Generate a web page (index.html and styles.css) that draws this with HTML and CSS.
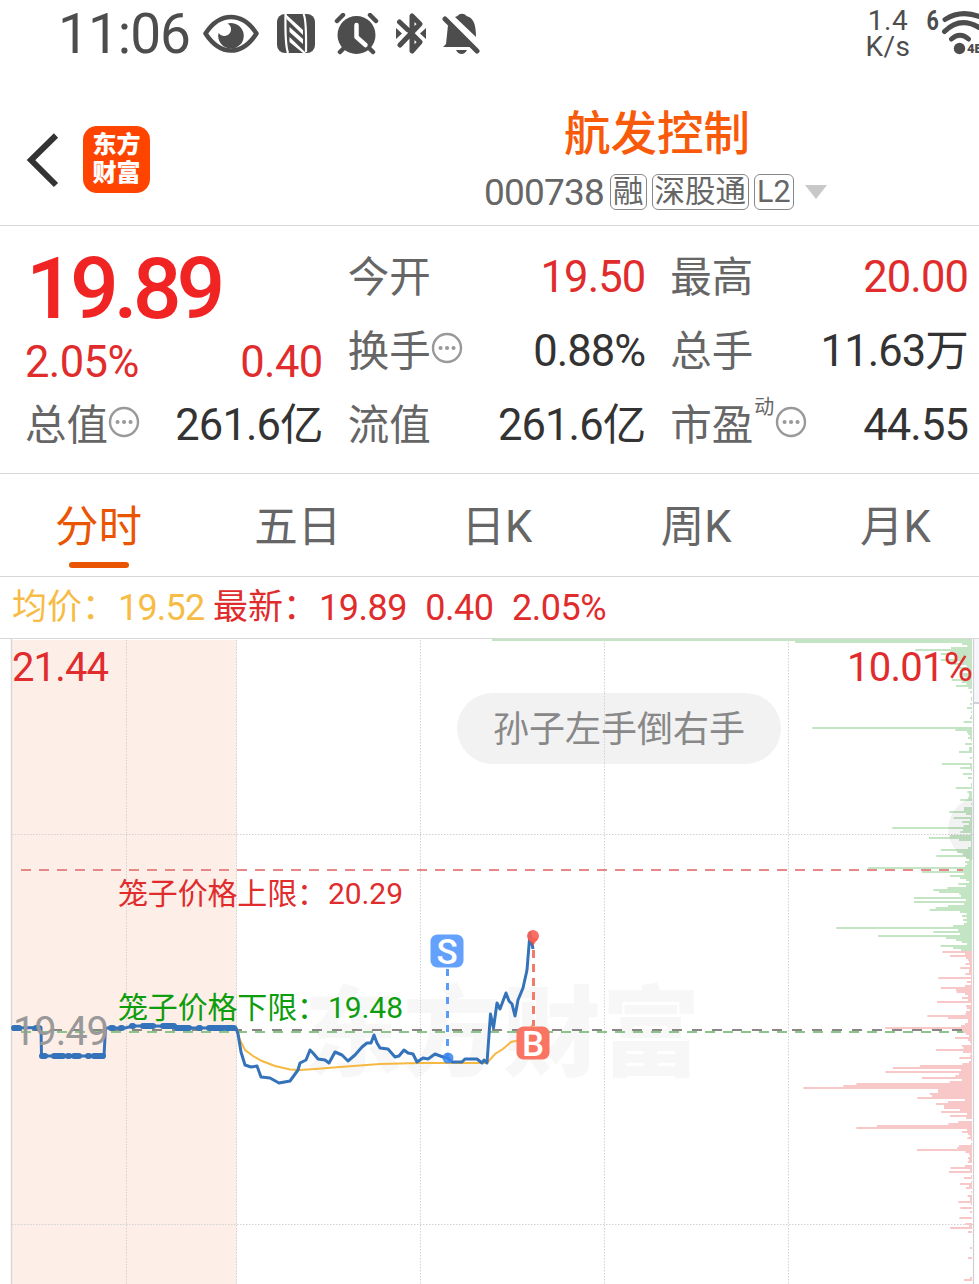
FILE: index.html
```html
<!DOCTYPE html>
<html lang="zh-CN">
<head>
    <meta charset="UTF-8">
    <meta name="viewport" content="width=device-width, initial-scale=1.0">
    <title>航发控制 000738</title>
    <link rel="stylesheet" href="styles.css">
</head>
<body>
    <div class="status-bar">
        <span class="clock">11:06</span>
        <svg class="icon-eye" width="56" height="40" viewBox="0 0 56 40">
            <path d="M2.500 19.500C10 8 18 3 28 3s18 5 25.500 16.500C46 31 38 36.500 28 36.500S10 31 2.500 19.500z" fill="none" stroke="#4d4d4d" stroke-width="4.500" stroke-linejoin="round"/>
            <path d="M24.500 9.500A12.800 12.800 0 1 1 15.500 19a7 7 0 0 0 12-1c1.500-3.500 0-7-3-8.500z" fill="#4d4d4d"/>
        </svg>
        <svg class="icon-nfc" width="40" height="42" viewBox="0 0 40 42">
            <rect x="1" y="1" width="38" height="39" rx="8" fill="#4d4d4d"/>
            <path d="M9.500 1Q9 32 12 40M27.500 1Q30.500 6 30 39" fill="none" stroke="#fff" stroke-width="2.200"/>
            <path d="M9.500 1L27 17v5L10.500 6zM13.500 14L27 26v5L13.500 19zM13.500 24L30 40h-3L13.500 29z" fill="#fff"/>
        </svg>
        <svg class="icon-alarm" width="46" height="42" viewBox="0 0 46 42">
            <circle cx="22.500" cy="22" r="19" fill="#4d4d4d"/>
            <path d="M3 8l6-6M42 8l-6-6M10 35l-4 4M35 35l4 4" stroke="#4d4d4d" stroke-width="4.500" stroke-linecap="round"/>
            <path d="M22.500 12v12l9 8" fill="none" stroke="#fff" stroke-width="4.500" stroke-linecap="round" stroke-linejoin="round"/>
        </svg>
        <svg class="icon-bluetooth" width="30" height="44" viewBox="0 0 30 44">
            <path d="M3.500 10l8.500 8M16 22l8 8-8 9V26M4 33L24 12l-8-8v12" fill="none" stroke="#4d4d4d" stroke-width="5" stroke-linecap="round" stroke-linejoin="round"/>
            <path d="M0 16l6 5.500L0 27zM30 16l-6 5.500 6 5.500z" fill="#4d4d4d"/>
        </svg>
        <svg class="icon-bell" width="40" height="44" viewBox="0 0 40 44">
            <path d="M6 13q-1 10-2 19l-3 3h29zM13 5q3-1 4-2.500 3-1.500 6 0Q24 4 27 5q7 3 7 20zM14 38h11q-2 4-5.500 4T14 38z" fill="#4d4d4d"/>
            <path d="M3 7l32 32" stroke="#4d4d4d" stroke-width="5" stroke-linecap="round"/>
        </svg>
        <div class="speed"><span>1.4</span><span>K/s</span></div>
        <svg class="icon-wifi" width="54" height="52" viewBox="0 0 54 52">
            <text x="2" y="22" class="wifi-gen">6</text>
            <path d="M20 11.500Q36 1.500 54 8.500M19.500 23.500Q35 8 54 19.500M26.500 31q8.500-7.500 17 0" fill="none" stroke="#4d4d4d" stroke-width="5" stroke-linecap="round"/>
            <circle cx="34.500" cy="40.500" r="5.700" fill="#4d4d4d"/>
            <text x="42" y="45" class="wifi-band">4E</text>
        </svg>
    </div>

    <div class="header">
        <svg class="back" width="36" height="58" viewBox="0 0 36 58">
            <path d="M31 4.500L6 29l25 25" fill="none" stroke="#333" stroke-width="6"/>
        </svg>
        <div class="logo"><span>东方</span><span>财富</span></div>
        <div class="stock">
            <div class="stock-name">航发控制</div>
            <div class="stock-code">
                <span class="code">000738</span>
                <span class="tag">融</span>
                <span class="tag">深股通</span>
                <span class="tag">L2</span>
                <span class="triangle"></span>
            </div>
        </div>
    </div>

    <div class="quote">
        <div class="quote-col">
            <div class="price">19.89</div>
            <div class="change"><span>2.05%</span><span>0.40</span></div>
            <div class="row">
                <span class="label">总值</span>
                <svg class="more" width="32" height="32" viewBox="0 0 32 32"><circle cx="16" cy="16" r="14"/><path d="M9.500 16h.1M16 16h.1M22.500 16h.1"/></svg>
                <span class="value">261.6亿</span>
            </div>
        </div>
        <div class="quote-col">
            <div class="row"><span class="label">今开</span><span class="value red">19.50</span></div>
            <div class="row">
                <span class="label">换手</span>
                <svg class="more" width="32" height="32" viewBox="0 0 32 32"><circle cx="16" cy="16" r="14"/><path d="M9.500 16h.1M16 16h.1M22.500 16h.1"/></svg>
                <span class="value">0.88%</span>
            </div>
            <div class="row"><span class="label">流值</span><span class="value">261.6亿</span></div>
        </div>
        <div class="quote-col">
            <div class="row"><span class="label">最高</span><span class="value red">20.00</span></div>
            <div class="row"><span class="label">总手</span><span class="value">11.63万</span></div>
            <div class="row">
                <span class="label">市盈</span><span class="sup">动</span>
                <svg class="more" width="32" height="32" viewBox="0 0 32 32"><circle cx="16" cy="16" r="14"/><path d="M9.500 16h.1M16 16h.1M22.500 16h.1"/></svg>
                <span class="value">44.55</span>
            </div>
        </div>
    </div>

    <div class="tabs">
        <div class="tab active">分时</div>
        <div class="tab">五日</div>
        <div class="tab">日K</div>
        <div class="tab">周K</div>
        <div class="tab">月K</div>
    </div>

    <div class="legend">
        <span class="avg">均价：</span><span class="avg num">19.52</span>
        <span class="last">最新：</span><span class="num">19.89</span><span class="num">0.40</span><span class="num">2.05%</span>
    </div>

    <svg class="chart" width="979" height="646" viewBox="0 638 979 646">
        <rect x="12" y="640" width="225" height="644" fill="#fdeee8"/>
        <text class="watermark" x="304" y="1068" textLength="396">东方财富</text>

        <!-- grid -->
        <path class="grid" d="M126.500 640V1284M236.500 640V1284M420.500 640V1284M604.500 640V1284M788.500 640V1284M12 834.500H973M12 1224.500H973"/>
        <path d="M0 638.500H979" stroke="#d8d8d8"/>
        <path d="M11.500 639V1284" stroke="#dcd8d8" stroke-width="1.500"/>
        <rect x="974" y="639" width="5" height="63" fill="#f6f6fb"/>
        <path d="M974 703H979" stroke="#d0d0da" stroke-width="2"/>

        <g id="volumes"></g>
        <path d="M973.500 639V1284" stroke="#d0d0d4" stroke-width="1.200"/>
        <path d="M973 798C940 806 940 852 973 860z" fill="#000" opacity=".05"/>

        <!-- limits and previous close -->
        <path d="M21 870H963" stroke="#e68888" stroke-width="2" stroke-dasharray="10 8"/>
        <path d="M12 1030H963" stroke="#8a8683" stroke-width="2" stroke-dasharray="10 10"/>
        <path d="M21 1032H963" stroke="#8cc48c" stroke-width="2" stroke-dasharray="10 8"/>

        <polyline class="avg-line" points="237,1029 240,1040 245,1050 253,1056 262,1061 275,1066 290,1069.500 300,1070 315,1069 340,1067 380,1064 420,1063 487,1063 495,1054 503,1049 511,1042 520,1040 527,1036 533,1024"/>
        <polyline class="price-line" points="12,1028 41,1027.500 41.500,1056 104,1056 105.500,1028 125,1028 133,1026 155,1026 175,1026.500 180,1028 236,1028 238,1034 241,1052 245,1065 251,1067 257,1066 261,1077 270,1078 279,1083 290,1081 298,1070 300,1063 306,1060 310,1050 313,1053 318,1059 325,1060 329,1063 335,1052 342,1055 348,1061 355,1055 362,1047 367,1043 371,1043 374,1035 377,1043 380,1048 388,1049 395,1057 399,1056 404,1050 408,1053 413,1054 417,1062 423,1058 428,1059 435,1054 443,1057 448,1058 452,1062 462,1062 465,1059 477,1059 482,1063 484,1060 487,1063 490.500,1014 493.500,1028 497,1003 500,1009 506,993 509,1001 512,1004 515,1016 518,1000 523,988 527,970 530,933 533,949"/>
        <path class="auction" d="M14 1028h5M36 1028h3M42 1056h3M54 1056h9M68 1056h1M74 1056h5M88 1056h1M94 1056h9M111 1028h2M121 1028h1M132 1026h1M143 1026h10M163 1026h11M177 1028h12M199 1028h1M209 1028h14M226 1028h8"/>

        <!-- trade markers -->
        <path d="M447.500 969V1056" stroke="#5b9cf6" stroke-width="3" stroke-dasharray="7 7"/>
        <circle cx="448" cy="1058" r="5.500" fill="#3585ee" opacity=".85"/>
        <rect x="430.500" y="934.500" width="33" height="33" rx="7" fill="#64a1fc"/>
        <text class="marker" x="447" y="963.500">S</text>
        <path d="M533.500 950V1026" stroke="#f27b6b" stroke-width="3" stroke-dasharray="8 6"/>
        <path d="M528 938h10l-5 8z" fill="#ee4c40" opacity=".8"/>
        <circle cx="533" cy="936" r="6" fill="#f95f52" opacity=".9"/>
        <rect x="516.500" y="1026.500" width="33" height="33" rx="7" fill="#fa7463"/>
        <text class="marker" x="533" y="1055.500">B</text>

        <text x="12" y="681" class="axis red" textLength="97">21.44</text>
        <text x="847" y="681" class="axis red" textLength="126">10.01%</text>
        <text x="13" y="1045" class="axis" textLength="96">19.49</text>
        <text x="118" y="904" class="limit red" textLength="209">笼子价格上限：</text>
        <text x="328" y="904" class="limit red" textLength="75">20.29</text>
        <text x="118" y="1018" class="limit green" textLength="209">笼子价格下限：</text>
        <text x="328" y="1018" class="limit green" textLength="75">19.48</text>

        <rect x="457" y="693" width="324" height="71" rx="35.500" fill="#f2f2f2"/>
        <path class="grid" d="M604.500 693V764"/>
        <text x="493" y="742" class="bubble" textLength="252">孙子左手倒右手</text>
    </svg>
    <script src="chart.js"></script>
</body>
</html>
```

FILE: styles.css
```css
body {
    margin: 0;
    width: 979px;
    height: 1284px;
    overflow: hidden;
    background-color: #ffffff;
    color: #333333;
    font-family: Roboto, "Noto Sans CJK SC", sans-serif;
}
.status-bar {
    display: flex;
    align-items: center;
    height: 68px;
    box-sizing: border-box;
    padding-left: 58px;
    color: #4d4d4d;
}
.status-bar svg {
    flex: none;
}
.clock {
    width: 145px;
    font-size: 55px;
    line-height: 68px;
    letter-spacing: -1px;
}
.icon-nfc {
    margin-left: 17px;
}
.icon-alarm {
    margin-left: 18px;
}
.icon-bluetooth {
    margin-left: 16px;
}
.icon-bell {
    margin-left: 16px;
}
.speed {
    display: flex;
    flex-direction: column;
    align-items: center;
    width: 50px;
    margin-left: 381px;
    font-size: 28px;
    line-height: 26px;
    letter-spacing: 0.5px;
}
.icon-wifi {
    margin-left: 12px;
}
.wifi-gen {
    font-size: 27px;
    font-weight: 700;
    fill: #4d4d4d;
    transform: scaleX(0.8);
}
.wifi-band {
    font-size: 13px;
    font-weight: 900;
    fill: #4d4d4d;
}
.header {
    display: flex;
    align-items: center;
    height: 157px;
    border-bottom: 1px solid #d8d8d8;
}
.back {
    margin: 26px 0 0 25px;
}
.logo {
    display: flex;
    flex-direction: column;
    align-items: center;
    justify-content: center;
    width: 67px;
    height: 67px;
    margin: 25px 0 0 22px;
    border-radius: 14px;
    background-color: #ff4400;
    color: #ffffff;
    font-size: 24px;
    font-weight: 900;
    line-height: 28px;
}
.stock {
    margin: 31px 0 0 334px;
}
.stock-name {
    padding-left: 80px;
    color: #f85a0a;
    font-size: 46.5px;
    font-weight: 500;
    line-height: 60px;
}
.stock-code {
    display: flex;
    align-items: center;
    height: 56px;
    color: #666666;
}
.code {
    width: 126px;
    font-size: 37px;
    letter-spacing: -0.8px;
}
.tag {
    box-sizing: border-box;
    height: 36px;
    margin-right: 5px;
    padding: 0 2px;
    border: 1.5px solid #888888;
    border-radius: 6px;
    font-size: 30.5px;
    line-height: 34px;
}
.triangle {
    margin-left: 6px;
    border: 11px solid transparent;
    border-top: 14px solid #c8c8c8;
    border-bottom: 0;
}
.quote {
    display: grid;
    grid-template-columns: repeat(3, 1fr);
    gap: 25px;
    height: 247px;
    box-sizing: border-box;
    padding: 14.5px 11px 0 25px;
}
.price {
    padding-left: 1px;
    color: #f12424;
    font-size: 86px;
    font-weight: 500;
    line-height: 96px;
    letter-spacing: -5px;
}
.change {
    display: flex;
    justify-content: space-between;
    color: #e02c2c;
    font-size: 43.5px;
    line-height: 52px;
    letter-spacing: -0.6px;
}
.row {
    display: flex;
    align-items: center;
    height: 74px;
    line-height: 74px;
}
.label {
    color: #666666;
    font-size: 41.5px;
}
.value {
    margin-left: auto;
    font-size: 43.5px;
    letter-spacing: -0.9px;
}
.red {
    color: #e02c2c;
    fill: #e02c2c;
}
.sup {
    margin: -38px 1px 0;
    color: #666666;
    font-size: 20px;
}
.more {
    margin-top: -7px;
    fill: none;
    stroke: #999999;
    stroke-width: 2.4;
}
.more path {
    stroke-width: 4;
    stroke-linecap: round;
}
.tabs {
    display: flex;
    height: 102px;
    overflow: hidden;
    border-top: 1px solid #d8d8d8;
    border-bottom: 1px solid #d8d8d8;
}
.tab {
    display: flex;
    flex-direction: column;
    align-items: center;
    flex: 0 0 199.2px;
    color: #666666;
    font-size: 43.5px;
    line-height: 107px;
}
.tabs .tab:first-child {
    margin-left: -1px;
}
.active {
    color: #ea5504;
}
.active::after {
    content: "";
    width: 60px;
    height: 6px;
    margin-top: -19px;
    border-radius: 3px;
    background-color: #ea5504;
}
.legend {
    display: flex;
    height: 61px;
    padding-left: 12px;
    color: #e02c2c;
    font-size: 36px;
    line-height: 62px;
}
.legend .avg {
    color: #f7bc45;
}
.legend .num {
    margin-right: 18.5px;
    letter-spacing: -0.5px;
}
.legend .avg.num {
    margin-right: 8.5px;
    letter-spacing: -0.8px;
}
.legend span:not(.num) {
    width: 106px;
    white-space: nowrap;
    font-size: 35px;
}
.chart {
    display: block;
}
.grid {
    fill: none;
    stroke: #d2d2d2;
    stroke-dasharray: 1.5 1.5;
}
.watermark {
    font-size: 98px;
    font-weight: 900;
    fill: #f7f7f7;
}
.avg-line {
    fill: none;
    stroke: #f5b841;
    stroke-width: 2;
}
.price-line {
    fill: none;
    stroke: #3472b9;
    stroke-width: 3;
    stroke-linejoin: round;
}
.auction {
    stroke: #3472b9;
    stroke-width: 6;
    stroke-linecap: round;
}
.marker {
    fill: #ffffff;
    font-size: 35px;
    font-weight: 500;
    text-anchor: middle;
}
.axis {
    font-size: 40px;
    fill: #999999;
}
.axis.red {
    fill: #e02c2c;
}
.limit {
    font-size: 30px;
}
.green {
    fill: #0d9d0d;
}
.bubble {
    font-size: 36px;
    fill: #888888;
}
```

FILE: chart.js
```js
// volume by price, [level, left edge] in thirds of a pixel; bars end at 576
var sells = [
    [14,-864],[20,45],[26,546],[32,562],[38,513],[44,406],[50,510],[56,482],[62,530],[68,528],[74,482],[80,545],
    [86,520],[92,560],[98,530],[104,545],[110,565],[116,540],[122,550],[128,560],[134,515],[140,545],[146,560],
    [152,528],[158,565],[170,570],[188,573],[194,573],[206,570],[218,561],[230,573],[242,573],[248,570],[260,551],
    [278,97],[284,526],[290,561],[296,564],[302,570],[308,564],[314,573],[326,555],[338,567],[344,567],[350,537],
    [368,570],[386,486],[392,570],[398,541],[404,573],[416,549],[428,564],[446,573],[452,573],[458,527],[470,562],
    [476,567],[482,567],[488,564],[494,541],[506,573],[518,552],[524,552],[530,508],[536,558],[542,573],[548,521],
    [554,570],[560,547],[566,567],[572,551],[578,337],[584,549],[590,541],[596,573],[602,510],[608,447],[614,537],
    [620,573],[626,573],[632,573],[638,564],[644,482],[650,531],[656,549],[662,469],[668,558],[674,567],[680,555],
    [686,561],[692,555],[698,264],[704,549],[710,426],[716,552],[722,510],[728,540],[734,558],[740,567],[746,535],
    [752,558],[758,502],[764,460],[770,477],[776,538],[782,543],[788,402],[794,558],[800,402],[806,552],[812,504],
    [818,467],[824,449],[830,540],[836,560],[842,546],[848,560],[854,549],[860,560],[866,552],[872,519],[878,169],
    [884,534],[890,460],[896,540],[902,294],[908,498],[914,528],[920,545],[926,561],[932,482],[938,519],[944,543]
];
var buys = [
    [950,487],[956,555],[962,510],[968,558],[974,564],[980,567],[986,557],[992,570],[998,541],[1004,567],[1010,567],
    [1016,556],[1022,573],[1028,475],[1034,573],[1040,561],[1046,573],[1052,555],[1058,482],[1064,528],[1070,530],
    [1076,555],[1082,564],[1088,546],[1094,564],[1100,471],[1106,573],[1112,558],[1118,561],[1124,570],[1130,558],
    [1136,556],[1142,442],[1148,504],[1154,564],[1160,564],[1166,555],[1172,543],[1178,316],[1184,540],[1190,545],
    [1196,558],[1202,567],[1208,525],[1214,564],[1220,570],[1226,573],[1232,546],[1238,550],[1244,468],[1250,549],
    [1256,573],[1262,570],[1268,538],[1274,573],[1280,567],[1286,547],[1292,420],[1298,339],[1304,543],[1310,316],
    [1316,537],[1322,526],[1328,426],[1334,546],[1340,509],[1346,229],[1352,190],[1358,70],[1364,474],[1370,474],
    [1376,449],[1382,456],[1388,412],[1394,555],[1400,504],[1406,468],[1412,492],[1418,492],[1424,540],[1430,483],
    [1436,561],[1442,510],[1448,558],[1460,535],[1466,505],[1472,291],[1478,229],[1484,561],[1490,546],[1496,564],
    [1502,570],[1508,562],[1514,573],[1526,573],[1532,537],[1538,532],[1544,411],[1550,556],[1556,567],[1562,570],
    [1568,564],[1574,567],[1580,564],[1592,555],[1598,512],[1604,570],[1610,507],[1622,573],[1628,552],[1640,573],
    [1646,540],[1652,567],[1658,558],[1670,573],[1682,563],[1688,570],[1694,570],[1700,535],[1706,573],[1718,541],
    [1730,570],[1748,538],[1766,555],[1772,567],[1778,510],[1790,564],[1838,570],[1868,564],[1928,570],[1934,552]
];

function drawBars(bars, color) {
    var d = '';
    bars.forEach(function(bar) {
        d += 'M' + (780 + bar[1] / 3) + ' ' + Math.round(634 + bar[0] / 3) + 'H972v2H' + (780 + bar[1] / 3) + 'z';
    });
    var path = document.createElementNS('http://www.w3.org/2000/svg', 'path');
    path.setAttribute('d', d);
    path.setAttribute('fill', color);
    document.getElementById('volumes').appendChild(path);
}

drawBars(sells, '#c3e5c4');
drawBars(buys, '#f8c8c8');
```
